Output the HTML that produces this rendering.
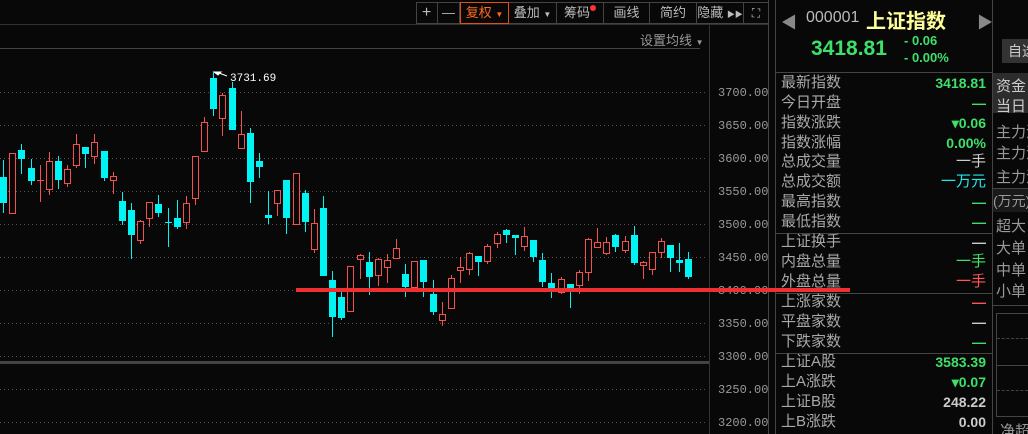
<!DOCTYPE html>
<html><head><meta charset="utf-8"><style>
*{margin:0;padding:0;box-sizing:border-box}
body{width:1028px;height:434px;background:#080808;overflow:hidden;position:relative;font-family:"Liberation Sans","Noto Sans CJK SC",sans-serif;color:#aaa}
.a{position:absolute;white-space:nowrap}
.tb{position:absolute;top:2px;height:22px;border:1px solid #444;border-left:none;color:#bbb;font-size:13px;text-align:center;line-height:20px;white-space:nowrap}
.row{position:absolute;left:781px;width:205px;height:20px;font-size:15px;color:#a8a8a8;line-height:20px;white-space:nowrap}
.row span{position:absolute;right:0;top:0;font-weight:bold;font-size:14px}
.g{color:#3ee06a}.c{color:#22e8ee}.r{color:#ff5555}.w{color:#ccc}
.hl{position:absolute;left:775px;width:217px;height:1px;background:#444}
.pl{position:absolute;left:718px;font-size:12px;color:#999;font-family:"Liberation Mono",monospace}
#fr{position:absolute;left:993px;top:0;width:35px;height:434px;overflow:hidden}
.rp{position:absolute;left:3px;font-size:15px;color:#999;white-space:nowrap}
</style></head><body>
<!-- toolbar -->
<div class="a" style="left:416px;top:2px;width:1px;height:22px;background:#444"></div>
<div class="tb" style="left:416px;width:22px;font-size:16px">+</div>
<div class="tb" style="left:438px;width:22px">—</div>
<div class="tb" style="left:460px;width:49px;border:1px solid #e05010;color:#ff6a20">复权 <span style="font-size:8px">▼</span></div>
<div class="tb" style="left:509px;width:48px">叠加 <span style="font-size:8px">▼</span></div>
<div class="tb" style="left:557px;width:47px">筹码<span style="display:inline-block;width:6px;height:6px;border-radius:3px;background:#f33;vertical-align:6px"></span></div>
<div class="tb" style="left:604px;width:46px">画线</div>
<div class="tb" style="left:650px;width:47px">简约</div>
<div class="tb" style="left:697px;width:47px">隐藏 <span style="font-size:8px">▶▶</span></div>
<div class="tb" style="left:744px;width:25px;font-size:12px">⛶</div>
<div class="a" style="left:0;top:24px;width:768px;height:1px;background:#333"></div>
<div class="a" style="left:640px;top:30px;font-size:13px;color:#999">设置均线 <span style="font-size:8px">▼</span></div>
<div class="a" style="left:0;top:48px;width:700px;height:1px;background:#444"></div>
<div class="a" style="left:709px;top:25px;width:1px;height:409px;background:#333"></div>
<div class="a" style="left:768px;top:0;width:1px;height:434px;background:#444"></div>
<div class="a" style="left:775px;top:0;width:1px;height:434px;background:#444"></div>
<div class="a" style="left:0;top:361px;width:709px;height:3px;background:#444"></div>
<div class="pl" style="top:86px">3700.00</div>
<div class="pl" style="top:119px">3650.00</div>
<div class="pl" style="top:152px">3600.00</div>
<div class="pl" style="top:185px">3550.00</div>
<div class="pl" style="top:218px">3500.00</div>
<div class="pl" style="top:251px">3450.00</div>
<div class="pl" style="top:284px">3400.00</div>
<div class="pl" style="top:317px">3350.00</div>
<div class="pl" style="top:350px">3300.00</div>
<div class="pl" style="top:383px">3250.00</div>
<div class="pl" style="top:416px">3200.00</div>
<svg class="a" style="left:0;top:0" width="775" height="434" id="ch">
<g stroke="#555" stroke-dasharray="1,3">
<line x1="0" y1="92.5" x2="705" y2="92.5"/><line x1="0" y1="125.5" x2="705" y2="125.5"/><line x1="0" y1="158.5" x2="705" y2="158.5"/><line x1="0" y1="191.5" x2="705" y2="191.5"/><line x1="0" y1="224.5" x2="705" y2="224.5"/><line x1="0" y1="257.5" x2="705" y2="257.5"/><line x1="0" y1="290.5" x2="705" y2="290.5"/><line x1="0" y1="323.5" x2="705" y2="323.5"/><line x1="0" y1="356.5" x2="705" y2="356.5"/><line x1="0" y1="389.5" x2="705" y2="389.5"/><line x1="0" y1="422.5" x2="705" y2="422.5"/>
</g>
<path d="M214 72h7l-3 3zM219 73l8 3" stroke="#fff" fill="#fff" stroke-width="1"/>
<text x="230" y="81" fill="#fff" font-size="11" font-family="Liberation Mono,monospace">3731.69</text>
</svg>
<div class="a" style="left:296px;top:288px;width:554px;height:4px;background:#f03030;z-index:5"></div>
<!-- header -->
<div class="a" style="left:781px;top:9px;font-size:16px;color:#888">◀</div>
<div class="a" style="left:977px;top:9px;font-size:16px;color:#888">▶</div>
<div class="a" style="left:806px;top:9px;font-size:16px;color:#bbb">000001</div>
<div class="a" style="left:866px;top:5px;font-size:20px;font-weight:bold;color:#ffff99">上证指数</div>
<div class="a" style="left:811px;top:37px;font-size:21px;font-weight:bold;color:#3ee06a">3418.81</div>
<div class="a" style="left:904px;top:33px;font-size:13px;font-weight:bold;color:#3ee06a">- 0.06</div>
<div class="a" style="left:904px;top:50px;font-size:13px;font-weight:bold;color:#3ee06a">- 0.00%</div>
<div class="hl" style="top:72px"></div>
<div class="row" style="top:73px">最新指数<span class="g">3418.81</span></div>
<div class="row" style="top:93px">今日开盘<span class="g">—</span></div>
<div class="row" style="top:113px">指数涨跌<span class="g">▾0.06</span></div>
<div class="row" style="top:133px">指数涨幅<span class="g">0.00%</span></div>
<div class="row" style="top:152px">总成交量<span class="w" style="font-weight:normal;font-size:15px">一手</span></div>
<div class="row" style="top:172px">总成交额<span class="c" style="font-weight:normal;font-size:15px">一万元</span></div>
<div class="row" style="top:192px">最高指数<span class="g">—</span></div>
<div class="row" style="top:212px">最低指数<span class="g">—</span></div>
<div class="hl" style="top:233px"></div>
<div class="row" style="top:232px">上证换手<span class="w">—</span></div>
<div class="row" style="top:252px">内盘总量<span class="g" style="font-weight:normal;font-size:15px">一手</span></div>
<div class="row" style="top:272px">外盘总量<span class="r" style="font-weight:normal;font-size:15px">一手</span></div>
<div class="hl" style="top:293px"></div>
<div class="row" style="top:292px">上涨家数<span class="r">—</span></div>
<div class="row" style="top:312px">平盘家数<span class="w">—</span></div>
<div class="row" style="top:332px">下跌家数<span class="g">—</span></div>
<div class="hl" style="top:353px"></div>
<div class="row" style="top:352px">上证A股<span class="g">3583.39</span></div>
<div class="row" style="top:372px">上A涨跌<span class="g">▾0.07</span></div>
<div class="row" style="top:392px">上证B股<span class="w">248.22</span></div>
<div class="row" style="top:412px">上B涨跌<span class="w">0.00</span></div>
<!-- far right -->
<div class="a" style="left:992px;top:0;width:1px;height:434px;background:#444"></div>
<div id="fr">
<div class="a" style="left:9px;top:39px;width:40px;height:24px;background:#333;color:#ccc;font-size:14px;line-height:24px;padding-left:6px">自选</div>
<div class="a" style="left:0;top:73px;width:35px;height:40px;background:#2c2c2c"></div>
<div class="rp" style="top:75px;color:#ccc">资金</div>
<div class="rp" style="top:95px;color:#ccc">当日</div>
<div class="rp" style="top:121px">主力流</div>
<div class="rp" style="top:142px">主力流</div>
<div class="rp" style="top:166px">主力流</div>
<div class="a" style="left:0;top:188px;width:35px;height:1px;background:#444"></div>
<div class="a" style="left:0;top:189px;width:35px;height:23px;background:#1a1a1a"></div>
<div class="rp" style="top:191px;left:0;font-size:14px">(万元)</div>
<div class="rp" style="top:215px">超大</div>
<div class="rp" style="top:237px">大单</div>
<div class="rp" style="top:259px">中单</div>
<div class="rp" style="top:280px">小单</div>
<div class="a" style="left:0;top:305px;width:35px;height:1px;background:#444"></div>
<div class="a" style="left:3px;top:313px;width:40px;height:104px;border:1px solid #444"></div>
<div class="a" style="left:4px;top:338px;width:31px;border-top:1px dashed #444"></div>
<div class="a" style="left:4px;top:365px;width:31px;height:1px;background:#444"></div>
<div class="a" style="left:4px;top:390px;width:31px;border-top:1px dashed #444"></div>
<div class="rp" style="top:420px;left:7px">净超</div>
</div>
<script>
var C=[
[0,'c',177,203,160,213],[9,'r',153,213,153,213],[18,'c',150,159,144,174],[28,'c',168,181,159,185],[37,'x',180,180,165,202],[46,'r',161,189,152,195],[55,'c',161,180,156,189],[64,'r',169,183,165,187],[73,'r',144,165,134,168],[82,'c',147,154,147,168],[91,'r',142,156,134,164],[101,'c',151,178,151,181],[110,'r',176,180,172,194],[119,'c',201,221,192,225],[128,'c',210,235,203,259],[137,'r',221,240,220,244],[146,'r',202,218,202,227],[155,'c',204,213,195,217],[165,'y',222,222,208,247],[174,'c',218,227,200,229],[183,'r',203,222,196,229],[192,'r',156,198,156,205],[201,'r',122,151,117,151],[210,'c',78,109,72,116],[219,'r',95,118,93,136],[229,'c',88,130,82,130],[238,'r',134,148,111,148],[247,'c',133,182,128,203],[256,'c',161,167,153,178],
[265,'c',215,218,191,224],[274,'r',190,203,190,216],[283,'c',180,218,180,234],[293,'r',173,224,173,224],[302,'c',193,222,190,232],[311,'r',223,249,209,253],[320,'c',208,276,196,276],[329,'c',280,317,271,337],[338,'c',297,318,292,320],[347,'r',266,311,266,311],[357,'r',255,259,254,279],[366,'c',262,277,252,295],[375,'r',259,275,258,286],[384,'r',260,267,254,283],[393,'r',248,258,239,258],[402,'c',274,287,264,297],[411,'r',261,287,261,287],[420,'c',260,282,260,297],[430,'c',294,312,280,315],[439,'r',314,320,302,326],[448,'r',278,308,275,308],[457,'r',267,270,257,283],[466,'r',253,269,252,275],[475,'c',256,262,256,276],[484,'r',246,261,244,264],[494,'r',234,243,232,248],
[503,'c',230,235,229,243],[512,'c',235,238,235,255],[521,'r',236,246,227,251],[530,'c',240,257,240,262],[539,'c',260,282,253,287],[548,'c',283,290,273,298],[558,'r',279,292,277,294],[567,'c',284,292,284,308],[576,'r',272,285,270,294],[585,'r',239,272,238,281],[594,'r',242,247,228,248],[603,'r',242,253,237,255],[612,'c',235,247,234,252],[622,'r',241,250,236,253],[631,'c',235,263,226,265],[640,'r',262,265,261,279],[649,'r',252,269,252,275],[658,'r',241,252,238,258],[667,'c',245,258,245,272],[676,'c',260,263,243,272],[685,'c',259,277,252,279]];
var s='',R='#f55050',Cy='#00f4f4';
C.forEach(function(d){var x=d[0],t=d[1],b1=d[2],b2=d[3],w1=d[4],w2=d[5];
if(t=='c'){s+='<line x1="'+(x+3.5)+'" y1="'+w1+'" x2="'+(x+3.5)+'" y2="'+w2+'" stroke="'+Cy+'"/><rect x="'+x+'" y="'+b1+'" width="7" height="'+Math.max(2,b2-b1)+'" fill="'+Cy+'"/>';}
else if(t=='r'){s+='<line x1="'+(x+3.5)+'" y1="'+w1+'" x2="'+(x+3.5)+'" y2="'+w2+'" stroke="'+R+'"/><rect x="'+(x+0.5)+'" y="'+(b1+0.5)+'" width="6" height="'+Math.max(2,b2-b1)+'" fill="#080808" stroke="'+R+'"/>';}
else{var col=t=='x'?R:Cy;s+='<line x1="'+(x+3.5)+'" y1="'+w1+'" x2="'+(x+3.5)+'" y2="'+w2+'" stroke="'+col+'"/><line x1="'+x+'" y1="'+(b1+0.5)+'" x2="'+(x+7)+'" y2="'+(b1+0.5)+'" stroke="'+col+'"/>';}
});
document.getElementById('ch').insertAdjacentHTML('beforeend',s);
</script>
</body></html>
